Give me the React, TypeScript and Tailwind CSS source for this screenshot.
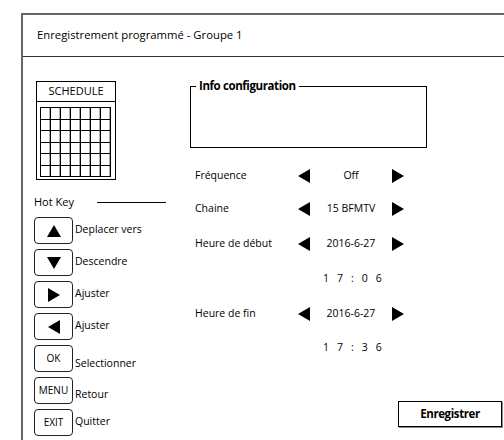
import React from "react";

const font = { fontFamily: '"Open Sans", "Noto Sans", sans-serif' };

function Tri({ dir, w = 12, h = 14 }: { dir: "l" | "r" | "u" | "d"; w?: number; h?: number }) {
  const pts =
    dir === "l"
      ? `0,${h / 2} ${w},0 ${w},${h}`
      : dir === "r"
      ? `0,0 ${w},${h / 2} 0,${h}`
      : dir === "u"
      ? `${w / 2},0 ${w},${h} 0,${h}`
      : `0,0 ${w},0 ${w / 2},${h}`;
  return (
    <svg width={w} height={h} viewBox={`0 0 ${w} ${h}`} className="block">
      <polygon points={pts} fill="#000" />
    </svg>
  );
}

function Key({ children, label, labelOffset = 0 }: { children: React.ReactNode; label: string; labelOffset?: number }) {
  return (
    <div className="flex h-[32px] items-start">
      <div className="flex h-[27px] w-[39px] items-center justify-center rounded-[4px] border border-[#222] text-[10px] text-black">
        {children}
      </div>
      <div className="ml-[2px] text-[10.5px] leading-[14px] text-black" style={{ marginTop: 5 + labelOffset }}>
        {label}
      </div>
    </div>
  );
}

function Row({ label, value, mt }: { label: string; value: string; mt: string }) {
  return (
    <div className={`flex h-[16px] items-center ${mt}`}>
      <div className="w-[108px] pl-[5px] text-[10.5px] text-black">{label}</div>
      <Tri dir="l" w={12} h={14} />
      <div className="w-[82px] text-center text-[10.5px] text-black">{value}</div>
      <Tri dir="r" w={12} h={14} />
    </div>
  );
}

export default function App() {
  const cells = Array.from({ length: 42 });
  return (
    <div className="h-[440px] w-[504px] overflow-hidden bg-white" style={font}>
      <div className="ml-[21px] mt-[13px] h-[427px] border-l-2 border-t-2 border-[#666]">
        <div className="flex h-[42px] items-center border-b border-[#333] pl-[14px] text-[11.3px] text-black">
          Enregistrement programmé - Groupe 1
        </div>
        <div className="flex">
          {/* left column */}
          <div className="w-[167px] shrink-0">
            <div className="ml-[13px] mt-[24px] flex h-[99px] w-[80px] flex-col border border-black">
              <div className="flex h-[20px] items-center justify-center border-b border-black text-[11px] text-black">
                SCHEDULE
              </div>
              <div className="ml-[3px] mt-[5px] grid w-[71px] grid-cols-[repeat(7,9px)] grid-rows-[repeat(6,10.5px)] gap-px bg-black p-px">
                {cells.map((_, i) => (
                  <div key={i} className="border-r border-[#aaa] bg-white" />
                ))}
              </div>
            </div>
            <div className="ml-[11px] mt-[15px] flex h-[14px] items-center">
              <span className="text-[11px] text-black">Hot Key</span>
              <div className="ml-[23px] h-px w-[69px] bg-black" />
            </div>
            <div className="ml-[11px] mt-[8px] flex flex-col">
              <Key label="Deplacer vers">
                <Tri dir="u" w={14} h={12} />
              </Key>
              <Key label="Descendre">
                <Tri dir="d" w={14} h={12} />
              </Key>
              <Key label="Ajuster">
                <Tri dir="r" w={12} h={14} />
              </Key>
              <Key label="Ajuster">
                <Tri dir="l" w={12} h={14} />
              </Key>
              <Key label="Selectionner" labelOffset={6}>
                OK
              </Key>
              <Key label="Retour" labelOffset={5}>
                MENU
              </Key>
              <Key label="Quitter">EXIT</Key>
            </div>
          </div>
          {/* right column */}
          <div className="flex flex-1 flex-col">
            <div className="relative mt-[29px] h-[62px] w-[237px] border-b border-l border-r border-black">
              <div className="absolute left-0 right-0 top-0 h-px bg-black" />
              <div className="absolute left-[5px] top-[-7px] bg-white px-[3px] text-[11.5px] font-bold leading-[14px] tracking-[-0.4px] text-black">
                Info configuration
              </div>
            </div>
            <Row label="Fréquence" value="Off" mt="mt-[20px]" />
            <Row label="Chaine" value="15 BFMTV" mt="mt-[17px]" />
            <Row label="Heure de début" value="2016-6-27" mt="mt-[19px]" />
            <div className="ml-[133px] mt-[19px] flex h-[16px] items-center gap-[8px] text-[10.5px] text-black">
              <span>1</span>
              <span>7</span>
              <span>:</span>
              <span>0</span>
              <span>6</span>
            </div>
            <Row label="Heure de fin" value="2016-6-27" mt="mt-[19px]" />
            <div className="ml-[133px] mt-[18px] flex h-[16px] items-center gap-[8px] text-[10.5px] text-black">
              <span>1</span>
              <span>7</span>
              <span>:</span>
              <span>3</span>
              <span>6</span>
            </div>
            <div className="ml-[208px] mt-[45px] flex h-[26px] w-[104px] items-center justify-center border border-black text-[11.5px] font-bold tracking-[-0.4px] text-black shadow-[1px_1px_0_#888]">
              Enregistrer
            </div>
          </div>
        </div>
      </div>
    </div>
  );
}
